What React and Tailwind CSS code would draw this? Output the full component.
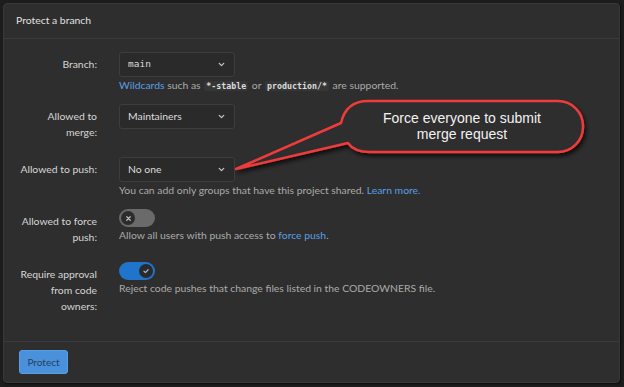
import React from "react";

function Chevron() {
  return (
    <svg width="9" height="9" viewBox="0 0 10 10" className="text-[#c8c8c8]">
      <path d="M2.5 3.8 L5 6.2 L7.5 3.8" fill="none" stroke="currentColor" strokeWidth="1.4" strokeLinecap="round" strokeLinejoin="round" />
    </svg>
  );
}

function Select({ children, mono }) {
  return (
    <div className="w-[116px] h-[25px] rounded-[3px] border border-[#3d3d3d] bg-[#2a2a2a] flex items-center justify-between pl-[8px] pr-[8px]">
      <span className={mono ? "font-['DejaVu_Sans_Mono',monospace] text-[9.5px] text-[#dcdcdc]" : "text-[10.4px] text-[#dcdcdc]"}>{children}</span>
      <Chevron />
    </div>
  );
}

function Code({ children }) {
  return (
    <span className="font-['DejaVu_Sans_Mono',monospace] text-[8.3px] font-bold text-[#dcdcdc] bg-[#363636] rounded-[2px] px-[2px] mx-[1px]">{children}</span>
  );
}

function Label({ children }) {
  return (
    <div className="w-[93px] shrink-0 text-right pt-[4px] text-[10.4px] leading-[16px] text-[#d6d6d6] whitespace-nowrap">{children}</div>
  );
}

function Toggle({ on }) {
  return on ? (
    <div className="w-[36px] h-[18px] rounded-full bg-[#1f75cb] flex items-center justify-end pr-[2px]">
      <div className="w-[14px] h-[14px] rounded-full bg-[#2a2a2a] flex items-center justify-center">
        <svg width="8" height="8" viewBox="0 0 10 10">
          <path d="M2.5 5.3 L4.3 7 L7.6 3.4" fill="none" stroke="#9fb8d6" strokeWidth="1.5" strokeLinecap="round" strokeLinejoin="round" />
        </svg>
      </div>
    </div>
  ) : (
    <div className="w-[36px] h-[18px] rounded-full bg-[#6a6a6a] flex items-center pl-[2px]">
      <div className="w-[14px] h-[14px] rounded-full bg-[#2c2c2c] flex items-center justify-center">
        <svg width="7" height="7" viewBox="0 0 10 10">
          <path d="M2.5 2.5 L7.5 7.5 M7.5 2.5 L2.5 7.5" fill="none" stroke="#bdbdbd" strokeWidth="1.7" strokeLinecap="round" />
        </svg>
      </div>
    </div>
  );
}

export default function App() {
  return (
    <div className="relative w-[624px] h-[387px] bg-[#1d1d1d] p-[3px] pr-[4px] pb-[4px] font-['Lato',sans-serif] overflow-hidden">
      <div className="h-full w-full rounded-[4px] border border-[#383838] bg-[#2e2e2e] flex flex-col shadow-[1px_1px_2px_rgba(0,0,0,0.6)]">
        <div className="h-[35px] shrink-0 border-b border-[#3b3b3b] flex items-center pl-[12px] text-[10.4px] text-[#e0e0e0]">
          Protect a branch
        </div>
        <div className="flex-1 pt-[13px] flex flex-col text-[10.4px] text-[#ababab]">
          <div className="h-[52px] flex gap-[22px]">
            <Label>Branch:</Label>
            <div className="flex flex-col">
              <Select mono>main</Select>
              <div className="leading-[16px] whitespace-nowrap">
                <span className="text-[#5a9fe6]">Wildcards</span> such as <Code>*-stable</Code> or <Code>production/*</Code> are supported.
              </div>
            </div>
          </div>
          <div className="h-[53px] flex gap-[22px]">
            <Label>Allowed to<br />merge:</Label>
            <div className="flex flex-col">
              <Select>Maintainers</Select>
            </div>
          </div>
          <div className="h-[52px] flex gap-[22px]">
            <Label>Allowed to push:</Label>
            <div className="flex flex-col">
              <Select>No one</Select>
              <div className="leading-[16px] whitespace-nowrap">
                You can add only groups that have this project shared. <span className="text-[#5a9fe6]">Learn more.</span>
              </div>
            </div>
          </div>
          <div className="h-[53px] flex gap-[22px]">
            <Label>Allowed to force<br />push:</Label>
            <div className="flex flex-col">
              <Toggle on={false} />
              <div className="leading-[16px] whitespace-nowrap">
                Allow all users with push access to <span className="text-[#5a9fe6]">force push</span>.
              </div>
            </div>
          </div>
          <div className="flex gap-[22px]">
            <Label>Require approval<br />from code<br />owners:</Label>
            <div className="flex flex-col">
              <Toggle on />
              <div className="leading-[16px] whitespace-nowrap">
                Reject code pushes that change files listed in the CODEOWNERS file.
              </div>
            </div>
          </div>
        </div>
        <div className="h-[41px] shrink-0 border-t border-[#3b3b3b] flex items-center pl-[15px]">
          <button className="w-[49px] h-[24px] rounded-[3px] bg-[#4a91dc] border border-[#5a9de4] text-[10px] text-[#263f5c]">
            Protect
          </button>
        </div>
      </div>

      <svg className="absolute left-0 top-0 pointer-events-none" width="624" height="387" viewBox="0 0 624 387">
        <defs>
          <filter id="sh" x="-20%" y="-20%" width="140%" height="160%">
            <feDropShadow dx="2" dy="3" stdDeviation="2" floodColor="#000" floodOpacity="0.7" />
          </filter>
        </defs>
        <path
          d="M368 101 H558 A25 25 0 0 1 583 126 V127 A25 25 0 0 1 558 152 H370 Q354 152 348 143 L236 169 L341 123 Q346 101 368 101 Z"
          fill="#2e2e2e"
          stroke="#ee3b3b"
          strokeWidth="2.5"
          strokeLinejoin="round"
          filter="url(#sh)"
        />
        <text x="462" y="123" textAnchor="middle" fontFamily="Liberation Sans, Arial, sans-serif" fontSize="14" fill="#f2f2f2">Force everyone to submit</text>
        <text x="462" y="139" textAnchor="middle" fontFamily="Liberation Sans, Arial, sans-serif" fontSize="14" fill="#f2f2f2">merge request</text>
      </svg>
    </div>
  );
}
